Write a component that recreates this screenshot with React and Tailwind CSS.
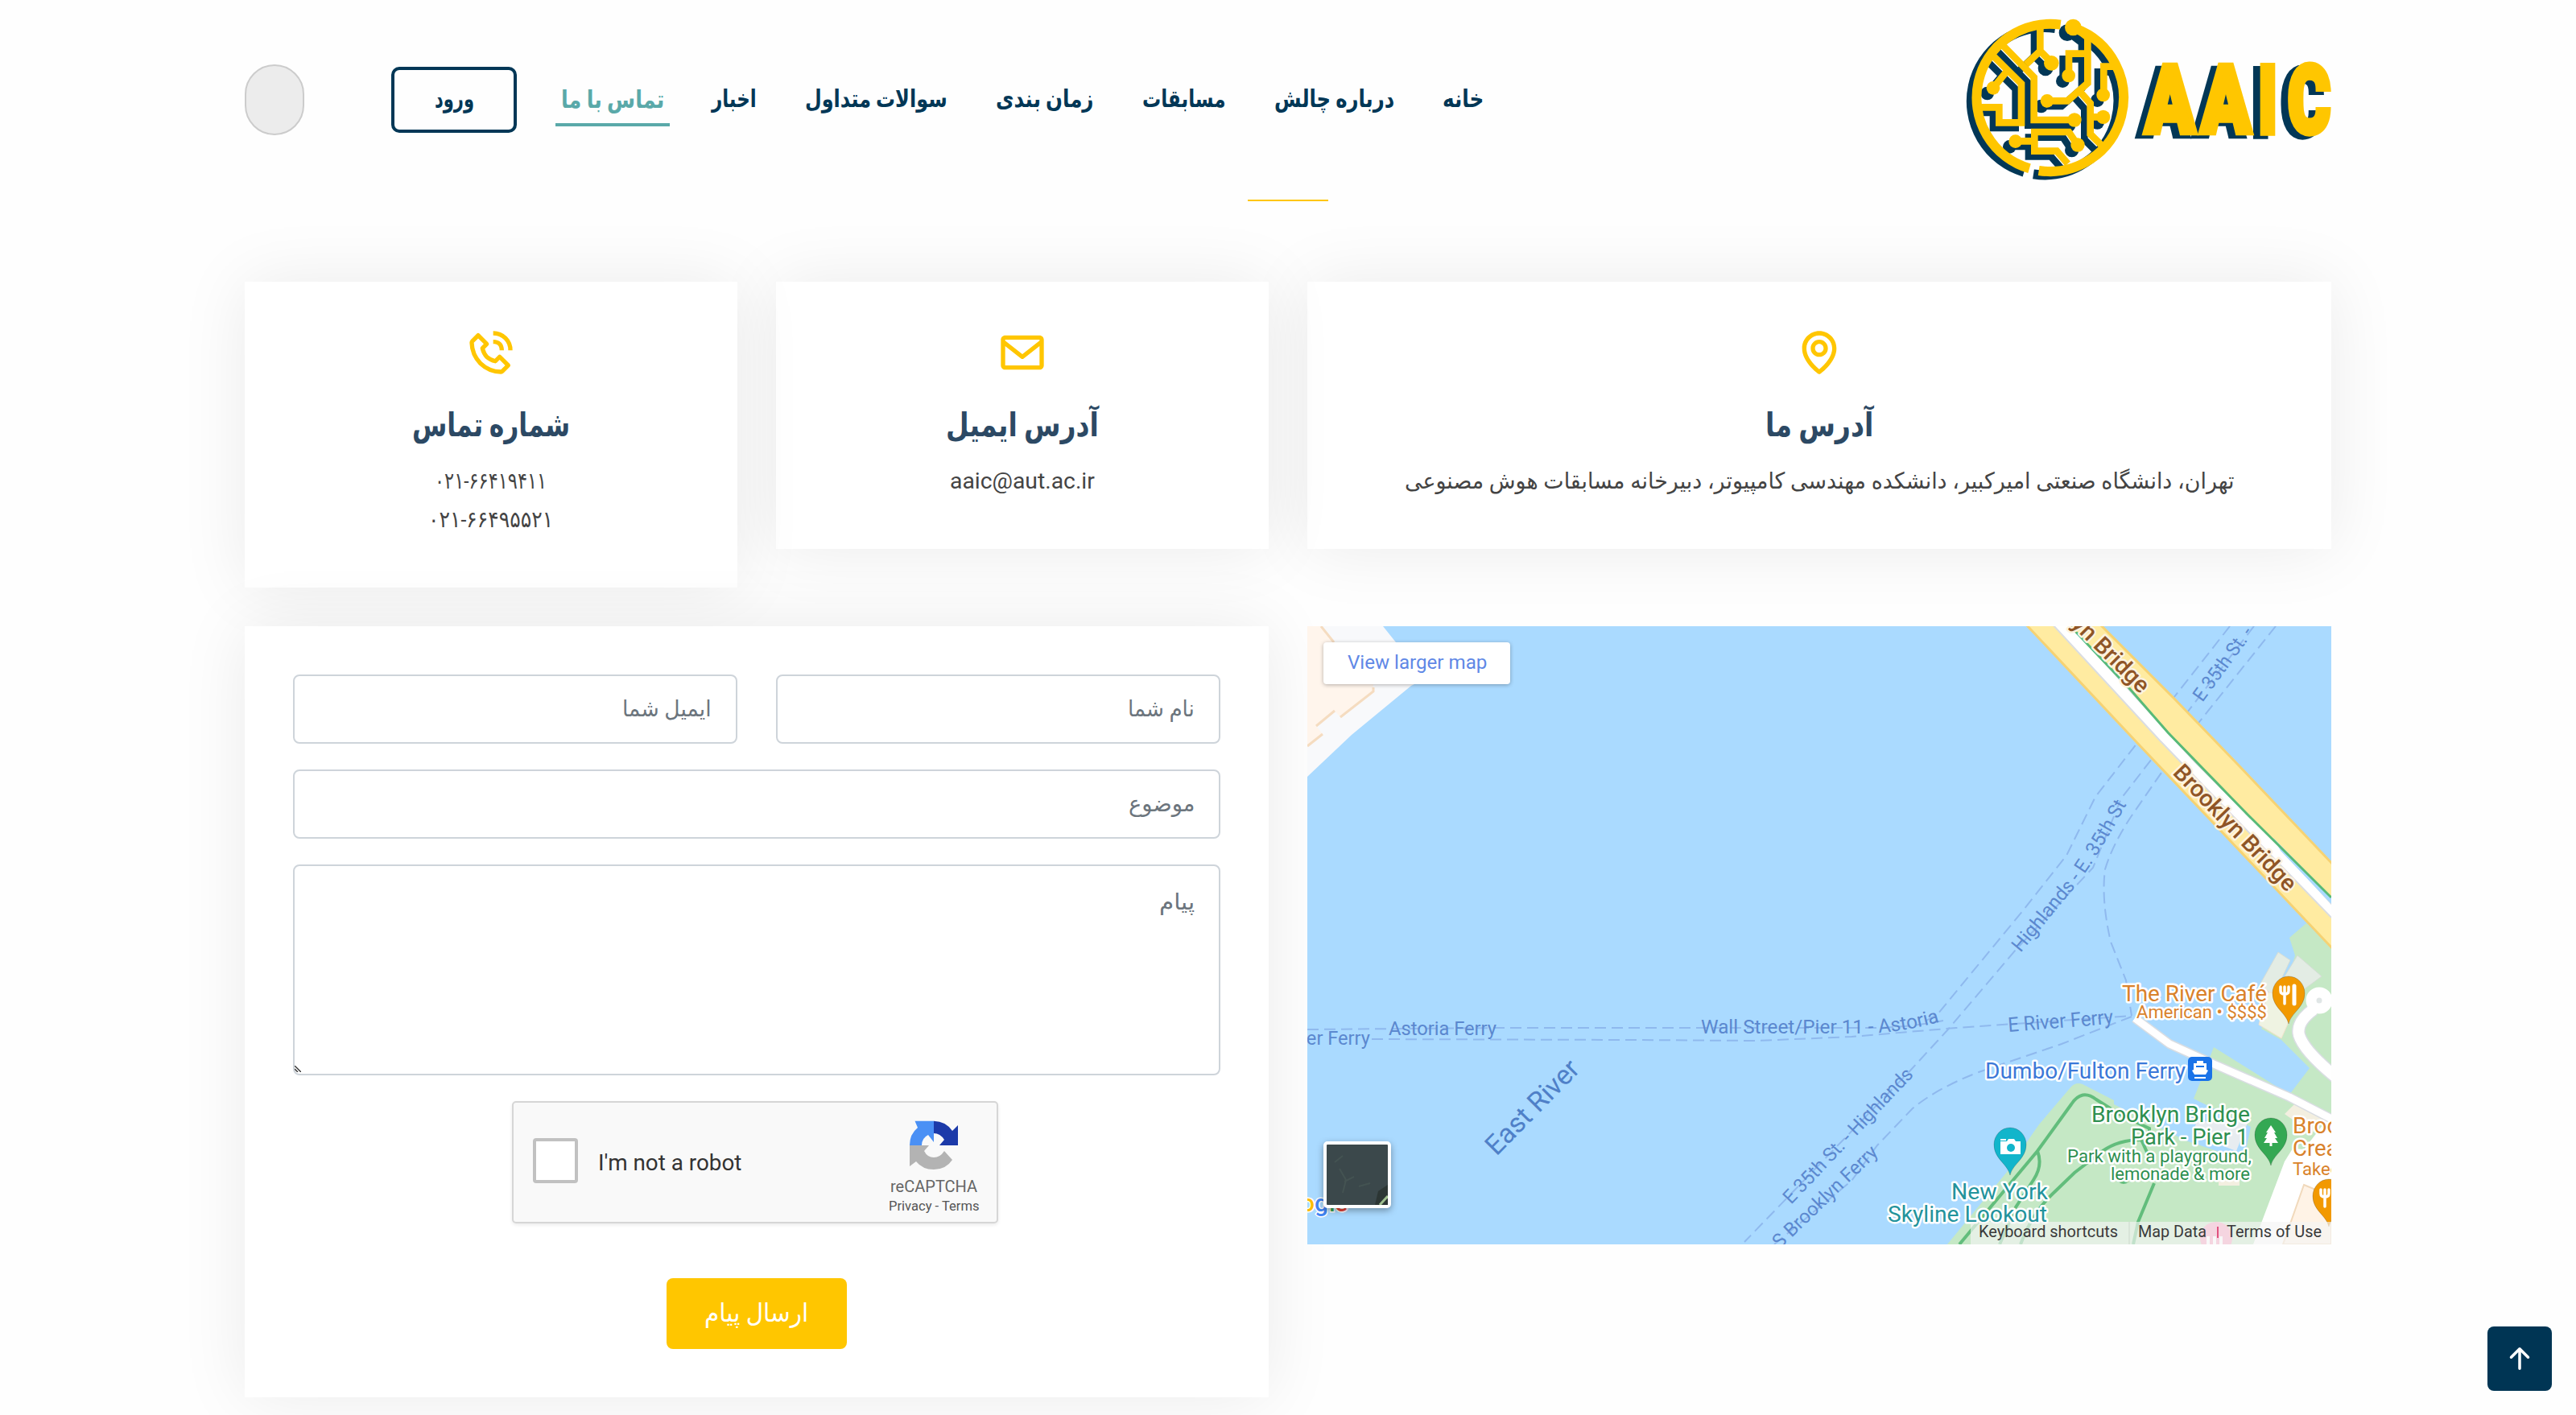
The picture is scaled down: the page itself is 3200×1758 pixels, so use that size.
import React, { useLayoutEffect, useRef } from "react";
import { BiPhoneCall, BiEnvelope, BiMap } from "react-icons/bi";
import { BsArrowUpShort } from "react-icons/bs";

/* A single line of text that is condensed or widened to fill its own box. */
function Fit({ className, inner = "", origin = "origin-right", children }) {
  const box = useRef(null);
  const text = useRef(null);
  useLayoutEffect(() => {
    const ratio = box.current.clientWidth / text.current.offsetWidth;
    text.current.style.transform = `scaleX(${ratio})`;
  }, []);
  return (
    <span ref={box} className={"inline-flex shrink-0 justify-start whitespace-nowrap " + className}>
      <span ref={text} className={"inline-block shrink-0 " + origin + " " + inner}>
        {children}
      </span>
    </span>
  );
}

const GOLD = "#ffc600";
const NAVY = "#023756";

function Circuit({ color }) {
  return (
    <g fill="none" stroke={color} strokeWidth="26">
      <path d="M343 100V190L290 240M343 190L385 232" />
      <path d="M205 170L320 288V447H470" />
      <path d="M165 205L273 312V457H190V400H118M222 262L168 328" />
      <path d="M468 100L520 140V310L445 376H370M520 200H450V282" />
      <path d="M625 248H580V354" />
      <path d="M490 340L530 385V500L575 545M530 436H578" />
      <path d="M250 526H320M482 540L450 492H322V563H405L446 610" />
      <g fill={color} stroke="none">
        <circle cx="385" cy="235" r="28" />
        <circle cx="471" cy="447" r="26" />
        <circle cx="168" cy="328" r="25" />
        <circle cx="466" cy="102" r="31" />
        <circle cx="369" cy="376" r="25" />
        <circle cx="449" cy="282" r="25" />
        <circle cx="578" cy="354" r="25" />
        <circle cx="578" cy="436" r="26" />
        <circle cx="251" cy="527" r="25" />
        <circle cx="483" cy="540" r="26" />
      </g>
    </g>
  );
}

function Ring({ color }) {
  return (
    <g fill="none" stroke={color} strokeWidth="36">
      <path d="M419 92A275 275 0 0 0 303 628" />
      <path d="M474 106A275 275 0 0 1 338 636" />
    </g>
  );
}

function Letters({ color }) {
  return (
    <g fill={color} stroke={color} strokeWidth="22" fontFamily="Roboto, sans-serif" fontWeight="900" fontSize="349">
      <text x="734" y="496" textLength="186" lengthAdjust="spacingAndGlyphs">A</text>
      <text x="942" y="496" textLength="186" lengthAdjust="spacingAndGlyphs">A</text>
      <text x="1155" y="496" textLength="72" lengthAdjust="spacingAndGlyphs">I</text>
      <text x="1266" y="496" textLength="159" lengthAdjust="spacingAndGlyphs">C</text>
    </g>
  );
}

function Logo() {
  return (
    <svg direction="ltr" style={{ direction: "ltr" }} className="h-[206px] w-[456px] shrink-0" viewBox="60 60 1368 618">
      <g transform="translate(-20 13)"><Ring color={NAVY} /></g>
      <g transform="translate(-22 20)"><Circuit color={NAVY} /></g>
      <Ring color={GOLD} />
      <Circuit color={GOLD} />
      <g transform="translate(-26 12)"><Letters color={NAVY} /></g>
      <Letters color={GOLD} />
    </svg>
  );
}

function Header() {
  const nav = "text-[30px] font-bold text-[#023756]";
  return (
    <header className="flex h-[248px] items-start px-[304px] pt-5">
      <Logo />
      <div className="ml-auto flex h-[208px] items-center pr-[597px]">
        <nav className="flex items-center gap-[60px] pb-[3px]">
          <Fit className="w-[51px]" inner={nav}>خانه</Fit>
          <Fit className="w-[149px]" inner={nav}>درباره چالش</Fit>
          <Fit className="w-[104px]" inner={nav}>مسابقات</Fit>
          <Fit className="w-[122px]" inner={nav}>زمان بندی</Fit>
          <Fit className="w-[177px]" inner={nav}>سوالات متداول</Fit>
          <Fit className="w-[56px]" inner={nav}>اخبار</Fit>
        </nav>
        <a className="mr-[52px] mt-px flex h-[64px] w-[142px] items-center justify-center border-b-4 border-[#5aa9a9] pt-px">
          <Fit className="w-[128px]" inner="text-[30px] font-bold text-[#5aa9a9]">تماس با ما</Fit>
        </a>
        <button className="mr-12 flex h-[82px] w-[156px] items-center justify-center rounded-[10px] border-4 border-[#023756] pb-[3px]">
          <Fit className="w-[49px]" inner={nav}>ورود</Fit>
        </button>
      </div>
      <div className="mt-[60px] h-[88px] w-[74px] rounded-[37px] border-2 border-[#cccccc] bg-[#ececec]" />
    </header>
  );
}

function Card({ className, icon: Icon, title, titleWidth, children }) {
  return (
    <div className={"flex flex-col items-center bg-white pt-14 pb-[60px] shadow-[0_0_80px_rgba(0,10,8,0.08)] " + className}>
      <Icon className="size-16 text-[#ffc600]" />
      <h3 className="mt-[28px] flex h-[60px] items-center">
        <Fit className={titleWidth} inner="text-[41px] leading-[60px] font-bold text-[#2c4964]">{title}</Fit>
      </h3>
      <div className="mt-[16px] flex flex-col items-center">{children}</div>
    </div>
  );
}

const body = "text-[28px] leading-[48px] text-[#444444]";

function Field({ width, children }) {
  return (
    <div className="flex h-[86px] flex-1 items-center rounded-[8px] border-2 border-[#ced4da] px-[30px]">
      <Fit className={width} inner="text-[28px] text-[#6c757d]">{children}</Fit>
    </div>
  );
}

function Recaptcha() {
  return (
    <div dir="ltr" className="mt-8 mr-1 flex h-[152px] w-[604px] rounded-[5px] border-2 border-[#d6d6d6] bg-[#f9f9f9] shadow-[0_2px_4px_rgba(0,0,0,0.08)]">
      <div className="mt-11 ml-[24px] size-14 rounded-[4px] border-4 border-[#c1c1c1] bg-white" />
      <Fit className="mt-[54px] ml-[25px] w-[178px]" origin="origin-left" inner="text-[28px] leading-[42px] text-[#333333]">I'm not a robot</Fit>
      <div className="mt-[22px] mr-[21px] ml-auto flex w-[114px] flex-col items-center">
        <svg className="h-[62px] w-[60px]" viewBox="0 0 60 62">
          <path fill="#1c3aa9" d="M30 .7Q45 1 53 13L60 6V31H37L43 24Q38 16 30 16Z" />
          <path fill="#4a90f5" d="M6.500 .7H30V27L23 18Q15 22 15 31H0Q0 17 10 9Z" />
          <path fill="#b3b3b3" d="M0 31H24L18 38Q22 46 30 46Q38 46 43 38L53 49Q45 61 30 61Q16 61 8 51L0 57Z" />
        </svg>
        <Fit className="mt-[8px] w-[108px]" origin="origin-left" inner="text-[20px] leading-[24px] text-[#666666]">reCAPTCHA</Fit>
        <Fit className="mt-[1px] w-[113px]" origin="origin-left" inner="text-[17px] leading-[22px] text-[#555555]">Privacy - Terms</Fit>
      </div>
    </div>
  );
}

function Label({ x, y, w, size, color, weight = 400, rotate = 0, halo, children }) {
  return (
    <text
      transform={`translate(${x} ${y}) rotate(${rotate})`}
      textLength={w}
      lengthAdjust="spacingAndGlyphs"
      fontSize={size}
      fontWeight={weight}
      fill={color}
      stroke={halo}
      strokeWidth={halo ? 5 : 0}
      strokeLinejoin="round"
      paintOrder="stroke"
    >
      {children}
    </text>
  );
}

function Pin({ x, y, color, children }) {
  return (
    <g transform={`translate(${x} ${y})`}>
      <path fill={color} stroke="#00000030" strokeWidth="1" d="M0 37C-3 23-20 17-20-1A20 21 0 0 1 20-1C20 17 3 23 0 37Z" />
      {children}
    </g>
  );
}

function Fork() {
  return (
    <g stroke="#fff" strokeWidth="3.500" strokeLinecap="round" fill="none">
      <path d="M-5-9V12M-10-9V-4Q-10 0-5 0Q0 0 0-4V-9" />
      <path d="M7-10V12" strokeWidth="5" />
    </g>
  );
}

function CityMap() {
  const sea = "#5b88cf";
  const w = "#ffffff";
  return (
    <svg className="block h-[768px] w-[1272px]" viewBox="0 0 1272 768" fontFamily="Roboto, sans-serif">
      <rect width="1272" height="768" fill="#aadaff" />

      <path fill="#f8f9fb" d="M0 0H94L110 20L145 66L129 74L55 135L0 187Z" />
      <path fill="#fff5ec" d="M0 0H17L33 20L82 60V80L41 113L34 105L11 124L19 134L0 149Z" />
      <path fill="none" stroke="#f5dcc0" strokeWidth="3" d="M82 76V81L41 113M34 105L11 124M19 134L0 149M17 0L33 20" />

      <g fill="none" stroke="#8fb9ee" strokeWidth="2" strokeDasharray="14 7">
        <path d="M1146 0L1076 89L1031 145L979 212L943 285L890 352L783 482L760 495" />
        <path d="M1176 0L1093 107L1049 165L1011 214L976 300L880 402L795 502L749 552L543 765" />
        <path d="M1203 0L1108 119L1063 179L1023 237Q1000 272 991 302Q986 340 998 392L1017 440L1024 484" />
        <path d="M0 501L240 499H680Q740 500 790 490" />
        <path d="M80 513L400 514L560 515L676 510L806 499L1024 484" />
        <path d="M1024 485L937 519L834 554Q780 575 751 600L708 645L676 689L580 768" />
      </g>

      <path fill="#c5e8c5" d="M1241 369L1220 387L1227 409L1215 450L1185 500L1210 514L1245 549L1220 582L1272 615V400Z" />
      <path fill="#c5e8c5" d="M1126 523L1220 582L1272 612V768H795L874 672L893 642L909 619L949 572Q955 566 963 569L1002 589V594L1091 639L1154 660L1166 650L1172 622L1101 587L1111 562Z" />
      <path fill="#e3ece4" stroke="#d5ddd6" d="M1206 405L1221 415L1200 460L1184 444ZM1230 409L1260 435L1237 452L1214 435Z" />
      <path fill="#eff3e2" stroke="#f3e2cc" d="M1194 455L1182 495L1210 512L1222 485L1212 455Z" />
      <path fill="#e7ecf0" d="M1104 616L1170 612L1154 652L1101 632Z" />
      <path fill="#fff" d="M1272 606L1238 650L1224 649L1214 665L1175 768H1272Z" />
      <path fill="#fff3e6" stroke="#f1d9bb" strokeWidth="2" d="M1238 694L1272 708V768H1212Z" />
      <path fill="#f3efe0" d="M1226 594L1262 612L1248 630L1214 606ZM1132 686H1158V695H1132Z" />

      <g fill="none" stroke="#62bd7c" strokeWidth="4">
        <path d="M810 768L907 652L949 594Q962 574 980 588L1010 607L1046 624V640" />
        <path d="M907 652Q914 670 902 688L880 722L860 768" />
        <path d="M886 768Q900 730 925 706L953 679L988 652Q1008 638 1036 638L1046 660" />
        <path d="M1052 692L1032 740L1026 768" />
      </g>
      <circle cx="1014" cy="684" r="9" fill="#62bd7c" />

      <g fill="none" strokeLinejoin="round">
        <path stroke="#d9dde2" strokeWidth="12" d="M1028 487L1071 519L1126 544L1220 585L1276 614" />
        <path stroke="#fff" strokeWidth="9" d="M1028 487L1071 519L1126 544L1220 585L1276 614" />
        <path stroke="#d9dde2" strokeWidth="17" d="M1250 476Q1228 492 1232 508Q1238 528 1280 562" />
        <path stroke="#fff" strokeWidth="14" d="M1250 476Q1228 492 1232 508Q1238 528 1280 562" />
        <circle cx="1257" cy="465" r="10" stroke="#fff" strokeWidth="13" fill="#e0e6e6" />
      </g>

      <path fill="#ffeba1" stroke="#f6d273" strokeWidth="3" d="M892-3L1031 145L1126 245L1275 402V297L1159 175L1076 89L984-3Z" />
      <path fill="#fff" stroke="#dadde2" strokeWidth="2" d="M925-3L1059 142L1275 365V348L1209 275L1103 169L946-3Z" />
      <path fill="#aadaff" d="M1200 263L1272 336V345L1209 279Z" />
      <path fill="none" stroke="#58ba78" strokeWidth="3" d="M948 0L1021 77L1069 132L1169 235L1272 337" />

      <Label x={-52} y={520} w={130} size={24} color={sea}>E River Ferry</Label>
      <Label x={101} y={508} w={134} size={24} color={sea}>Astoria Ferry</Label>
      <path id="wall" fill="none" d="M489 506H690Q745 505 800 487" />
      <text fontSize="24" fill={sea}>
        <textPath href="#wall" textLength="298" lengthAdjust="spacingAndGlyphs">Wall Street/Pier 11 - Astoria</textPath>
      </text>
      <Label x={871} y={504} w={131} size={25} color={sea} rotate={-4.500}>E River Ferry</Label>
      <Label x={235} y={659} w={150} size={34} color="#4f80c8" rotate={-45.500}>East River</Label>
      <Label x={601} y={719} w={222} size={24} color={sea} rotate={-46.500}>E 35th St. - Highlands</Label>
      <Label x={587} y={774} w={171} size={24} color={sea} rotate={-44}>S Brooklyn Ferry</Label>
      <path id="highlands" fill="none" d="M886 406L948 331Q975 300 1025 208" />
      <text fontSize="24" fill={sea}>
        <textPath href="#highlands" textLength="228" lengthAdjust="spacingAndGlyphs">Highlands - E. 35th St</textPath>
      </text>
      <Label x={1112} y={95} w={108} size={24} color={sea} rotate={-54}>E 35th St. -</Label>
      <Label x={889} y={-61} w={206} size={29} weight={500} color="#8f5526" rotate={45} halo="#fdf3df">Brooklyn Bridge</Label>
      <Label x={1074} y={183} w={206} size={29} weight={500} color="#8f5526" rotate={46} halo="#fdf3df">Brooklyn Bridge</Label>

      <Label x={1012} y={466} w={180} size={28} color="#d9822b" halo={w}>The River Café</Label>
      <Label x={1030} y={487} w={162} size={22} color="#d9822b" halo={w}>American • $$$$</Label>
      <Label x={842} y={562} w={249} size={28} color="#3b78d8" halo={w}>Dumbo/Fulton Ferry</Label>
      <Label x={974} y={616} w={197} size={28} color="#2e8f50" halo={w}>Brooklyn Bridge</Label>
      <Label x={1023} y={644} w={146} size={28} color="#2e8f50" halo={w}>Park - Pier 1</Label>
      <Label x={944} y={666} w={229} size={22} color="#2e8f50" halo={w}>Park with a playground,</Label>
      <Label x={998} y={688} w={173} size={22} color="#2e8f50" halo={w}>lemonade &amp; more</Label>
      <Label x={800} y={712} w={120} size={28} color="#23939c" halo={w}>New York</Label>
      <Label x={721} y={740} w={198} size={28} color="#23939c" halo={w}>Skyline Lookout</Label>
      <Label x={1224} y={630} w={108} size={28} color="#d9822b" halo={w}>Brooklyn</Label>
      <Label x={1224} y={658} w={118} size={28} color="#d9822b" halo={w}>Creamery</Label>
      <Label x={1224} y={682} w={79} size={22} color="#d9822b" halo={w}>Takeout</Label>

      <rect x="1094" y="535" width="30" height="30" rx="5" fill="#1a73e8" />
      <path fill="#fff" d="M1105 540H1113V543H1117V551L1119 552L1116 557H1102L1099 552L1101 551V543H1105Z" />
      <path stroke="#fff" strokeWidth="2" d="M1102 561H1116" />
      <path stroke="#1a73e8" strokeWidth="2" d="M1104 547H1114" />

      <Pin x={1219} y={457} color="#f29900"><Fork /></Pin>
      <Pin x={1269} y={709} color="#f29900"><Fork /></Pin>
      <Pin x={1197} y={633} color="#34a853">
        <path fill="#fff" d="M0-13L6-4H4L8 3H5L9 9H1.500V13H-1.500V9H-9L-5 3H-8L-4-4H-6Z" />
      </Pin>
      <Pin x={873} y={645} color="#12b5cb">
        <path fill="#fff" d="M-12-5H-4L-2-8H5L7-5H13V11H-12Z" />
        <circle cx="1" cy="3" r="5" fill="#12b5cb" />
        <path stroke="#fff" strokeWidth="2" d="M-12-7H-5" />
      </Pin>

      <circle cx="1129" cy="760" r="20" fill="#f59ab9" />
      <path stroke="#fff" strokeWidth="4" d="M1119 758V768M1127 758V768M1135 758V768" />
      <rect x="824" y="740" width="448" height="28" fill="#f5f5f5" opacity="0.65" />
      <path stroke="#ccd8cc" strokeWidth="1" d="M1021 740V768" />
      <path stroke="#e0527f" strokeWidth="2" d="M1131 746V760" />
      <Label x={834} y={759} w={173} size={21} color="#3a3a3a">Keyboard shortcuts</Label>
      <Label x={1032} y={759} w={85} size={21} color="#3a3a3a">Map Data</Label>
      <Label x={1142} y={759} w={118} size={21} color="#3a3a3a">Terms of Use</Label>

      <g fontSize="30" fontWeight="500" stroke="#fff" strokeWidth="3" paintOrder="stroke">
        <text x="-8" y="727" fill="#fbbc05">o</text>
        <text x="9" y="727" fill="#4285f4">g</text>
        <text x="27" y="727" fill="#34a853">l</text>
        <text x="34" y="727" fill="#ea4335">e</text>
      </g>
    </svg>
  );
}

function MapPanel() {
  return (
    <div dir="ltr" className="relative h-[768px] w-[1272px] overflow-hidden">
      <CityMap />
      <div className="absolute top-5 left-5 flex h-[52px] w-[232px] items-center justify-center rounded-[4px] bg-white shadow-[0_1px_5px_rgba(0,0,0,0.3)]">
        <Fit className="w-[173px]" origin="origin-left" inner="text-[23px] text-[#6088e6]">View larger map</Fit>
      </div>
      <div className="absolute top-[640px] left-5 h-[83px] w-[84px] rounded-[5px] border-4 border-white bg-[#3b484b] shadow-[0_3px_8px_rgba(0,0,0,0.35)]">
        <svg className="size-full" viewBox="0 0 76 75" preserveAspectRatio="none">
          <path stroke="#445352" strokeWidth="2" fill="none" d="M10 22L20 14M16 30L24 44L20 60M22 46L34 40M40 52L54 48" />
          <path fill="#2c3634" d="M60 75L64 58L76 50V75Z" />
          <path stroke="#9fbf8f" strokeWidth="3" d="M66 75L76 64" />
        </svg>
      </div>
    </div>
  );
}

export default function App() {
  return (
    <div
      dir="rtl"
      className="relative h-[1758px] w-[3200px] overflow-hidden bg-[#fefefe] font-['Roboto','DejaVu_Sans',sans-serif]"
    >
      <Header />
      <div className="mx-auto h-[2px] w-[100px] bg-[#ffc600]" />

      <main className="flex flex-col gap-12 px-[304px] pt-[100px]">
        <section className="flex h-[380px] items-start gap-12">
          <Card className="w-[1272px]" icon={BiMap} title="آدرس ما" titleWidth="w-[134px]">
            <Fit className="w-[1031px]" inner={body}>
              تهران، دانشگاه صنعتی امیرکبیر، دانشکده مهندسی کامپیوتر، دبیرخانه مسابقات هوش مصنوعی
            </Fit>
          </Card>
          <Card className="w-[612px]" icon={BiEnvelope} title="آدرس ایمیل" titleWidth="w-[190px]">
            <Fit className="w-[180px]" inner={body}>aaic@aut.ac.ir</Fit>
          </Card>
          <Card className="w-[612px]" icon={BiPhoneCall} title="شماره تماس" titleWidth="w-[196px]">
            <Fit className="w-[139px]" inner={body}>۰۲۱-۶۶۴۱۹۴۱۱</Fit>
            <Fit className="w-[155px]" inner={body}>۰۲۱-۶۶۴۹۵۵۲۱</Fit>
          </Card>
        </section>

        <section className="flex items-start gap-12">
          <MapPanel />
          <form className="flex h-[958px] w-[1272px] flex-col items-center bg-white p-[60px] shadow-[0_0_80px_rgba(0,10,8,0.08)]">
            <div className="flex w-full gap-12">
              <Field width="w-[83px]">نام شما</Field>
              <Field width="w-[111px]">ایمیل شما</Field>
            </div>
            <div className="mt-8 flex w-full">
              <Field width="w-[82px]">موضوع</Field>
            </div>
            <div className="relative mt-8 h-[262px] w-full shrink-0 rounded-[8px] border-2 border-[#ced4da] px-[30px] pt-[24px]">
              <Fit className="w-[44px]" inner="text-[28px] text-[#6c757d]">پیام</Fit>
              <svg className="absolute bottom-[2px] left-0 h-2 w-2" viewBox="0 0 8 8">
                <path stroke="#333" strokeWidth="1.400" d="M0 0L8 8M0 4L4 8" />
              </svg>
            </div>
            <Recaptcha />
            <button type="button" className="mt-[68px] flex h-[88px] w-[224px] shrink-0 items-center justify-center rounded-[8px] bg-[#ffc600] pb-[3px]">
              <Fit className="w-[129px]" inner="text-[32px] text-white">ارسال پیام</Fit>
            </button>
          </form>
        </section>
      </main>

      <a className="absolute right-[30px] bottom-[30px] flex size-20 items-center justify-center rounded-[8px] bg-[#003554]">
        <BsArrowUpShort className="size-14 text-white" />
      </a>
    </div>
  );
}
